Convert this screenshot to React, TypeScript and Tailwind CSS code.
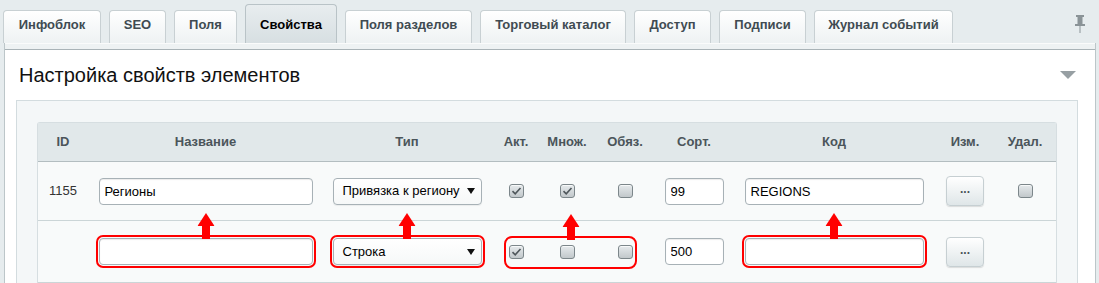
import React from 'react';

const tabs = [
  { label: 'Инфоблок', w: 'w-[98px]' },
  { label: 'SEO', w: 'w-[57px]' },
  { label: 'Поля', w: 'w-[63px]' },
  { label: 'Свойства', w: 'w-[92px]', active: true },
  { label: 'Поля разделов', w: 'w-[127px]' },
  { label: 'Торговый каталог', w: 'w-[146px]' },
  { label: 'Доступ', w: 'w-[77px]' },
  { label: 'Подписи', w: 'w-[87px]' },
  { label: 'Журнал событий', w: 'w-[139px]' },
];

const headers = ['ID', 'Название', 'Тип', 'Акт.', 'Множ.', 'Обяз.', 'Сорт.', 'Код', 'Изм.', 'Удал.'];

const cols = 'grid grid-cols-[50px_235px_168px_50px_52px_64px_74px_206px_56px_64px]';

function Arrow() {
  return (
    <svg
      width="17"
      height="26"
      viewBox="0 0 17 26"
      className="absolute bottom-full left-1/2 -translate-x-1/2 -mb-[2px]"
    >
      <polygon points="8.5,0 17,13 0,13" fill="#ff0000" />
      <rect x="4.5" y="12" width="8" height="14" fill="#ff0000" />
    </svg>
  );
}

function Marked({ children }: { children: React.ReactNode }) {
  return (
    <div className="relative">
      {children}
      <div className="pointer-events-none absolute -inset-[3px] rounded-[7px] border-2 border-[#ff0000]">
        <Arrow />
      </div>
    </div>
  );
}

function TextInput({ value, w }: { value: string; w: string }) {
  return (
    <input
      readOnly
      value={value}
      className={`${w} h-[27px] rounded-[4px] border border-[#a7b1b6] bg-white px-[5px] text-[13px] text-black shadow-[inset_0_1px_1px_rgba(0,0,0,0.08)] outline-none`}
    />
  );
}

function Select({ value }: { value: string }) {
  return (
    <div className="flex h-[27px] w-[149px] items-center justify-between rounded-[4px] border border-[#a7b1b6] bg-gradient-to-b from-white to-[#f6f8f8] pl-[9px] pr-[6px] text-[13px] text-black shadow-[0_1px_1px_rgba(0,0,0,0.06)]">
      <span className="whitespace-nowrap">{value}</span>
      <svg width="8" height="6" viewBox="0 0 8 6">
        <polygon points="0,0 8,0 4,6" fill="#111" />
      </svg>
    </div>
  );
}

function Checkbox({ checked }: { checked?: boolean }) {
  return (
    <div className="flex h-[14px] w-[15px] items-center justify-center rounded-[3px] border border-[#7c868a] bg-gradient-to-b from-[#e6eaec] to-[#c2c8cb] shadow-[inset_0_1px_0_rgba(255,255,255,0.7)]">
      {checked && (
        <svg width="11" height="10" viewBox="0 0 11 10">
          <path d="M1.5 5.2 L4.2 7.8 L9.5 2" stroke="#4f575b" strokeWidth="1.6" fill="none" />
        </svg>
      )}
    </div>
  );
}

function DotsButton() {
  return (
    <div className="flex h-[30px] w-[38px] items-center justify-center rounded-[4px] border border-[#c6cfd2] bg-gradient-to-b from-white to-[#dfe6e8] pb-[4px] text-[12px] font-bold text-[#4a5357] shadow-[0_1px_1px_rgba(0,0,0,0.12)]">
      ...
    </div>
  );
}

export default function App() {
  return (
    <div className="h-[283px] w-[1099px] overflow-hidden bg-[#e6ecee] font-['Liberation_Sans',Arial,sans-serif]">
      <div className="flex h-[43px] items-end gap-[8px] pl-[3px]">
        {tabs.map((t) => (
          <div
            key={t.label}
            className={`${t.w} flex items-end justify-center rounded-t-[4px] border border-b-0 pb-[10px] text-[13px] font-bold leading-[16px] whitespace-nowrap ${
              t.active
                ? 'h-[39px] border-[#b9c3c7] bg-gradient-to-b from-[#e8edef] to-[#d7dfe2] text-black'
                : 'h-[33px] border-[#c8d0d3] bg-gradient-to-b from-white to-[#eef2f3] text-[#404b52]'
            }`}
          >
            {t.label}
          </div>
        ))}
        <svg width="10" height="18" viewBox="0 0 10 18" className="ml-auto mr-[14px] self-start mt-[15px]">
          <rect x="1" y="0" width="8" height="2" fill="#8a9397" />
          <rect x="2.5" y="2" width="5" height="7" fill="#8a9397" />
          <rect x="0" y="9" width="10" height="2" fill="#8a9397" />
          <rect x="4.5" y="11" width="1" height="7" fill="#8a9397" />
        </svg>
      </div>

      <div className="ml-[4px] w-[1092px] border-x border-[#bcc6c9] bg-white">
        <div className="h-[7px] border-t border-b border-t-[#fafbfb] border-b-[#a9b3b7] bg-[#eef2f3]" />
        <div className="flex h-[50px] items-center justify-between pl-[14px] pr-[19px]">
          <div className="text-[20px] text-[#111]">Настройка свойств элементов</div>
          <svg width="16" height="8" viewBox="0 0 16 8">
            <polygon points="0,0 16,0 8,8" fill="#979fa3" />
          </svg>
        </div>

        <div className="ml-[11px] w-[1062px] border border-[#d3dcdf] bg-[#f4f7f8] px-[20px] pt-[21px] pb-[20px]">
          <div className="rounded-t-[3px] border-x border-t border-[#d6dee1] bg-[#f8fafa]">
            <div className={`${cols} h-[39px] border-b border-[#b3bdc0] bg-[#e1e8ea] text-[13px] font-bold text-[#4b555a]`}>
              {headers.map((h) => (
                <div key={h} className="flex items-center justify-center">
                  {h}
                </div>
              ))}
            </div>

            <div className={`${cols} h-[59px] border-b border-[#cbd5d7] text-[13px]`}>
              <div className="flex items-center justify-center text-[#333]">1155</div>
              <div className="flex items-center justify-center">
                <TextInput value="Регионы" w="w-[214px]" />
              </div>
              <div className="flex items-center justify-center">
                <Select value="Привязка к региону" />
              </div>
              <div className="flex items-center justify-center">
                <Checkbox checked />
              </div>
              <div className="flex items-center justify-center">
                <Checkbox checked />
              </div>
              <div className="flex items-center justify-center">
                <Checkbox />
              </div>
              <div className="flex items-center justify-center">
                <TextInput value="99" w="w-[59px]" />
              </div>
              <div className="flex items-center justify-center">
                <TextInput value="REGIONS" w="w-[179px]" />
              </div>
              <div className="flex items-center justify-center">
                <DotsButton />
              </div>
              <div className="flex items-center justify-center">
                <Checkbox />
              </div>
            </div>

            <div className={`${cols} h-[62px] border-b border-[#cbd5d7] text-[13px]`}>
              <div />
              <div className="flex items-center justify-center">
                <Marked>
                  <TextInput value="" w="w-[214px]" />
                </Marked>
              </div>
              <div className="flex items-center justify-center">
                <Marked>
                  <Select value="Строка" />
                </Marked>
              </div>
              <div className="relative col-span-3 grid grid-cols-[50px_52px_64px]">
                <div className="flex items-center justify-center">
                  <Checkbox checked />
                </div>
                <div className="flex items-center justify-center">
                  <Checkbox />
                </div>
                <div className="flex items-center justify-center">
                  <Checkbox />
                </div>
                <div className="pointer-events-none absolute left-[13px] top-[15px] h-[33px] w-[133px] rounded-[8px] border-2 border-[#ff0000]">
                  <Arrow />
                </div>
              </div>
              <div className="flex items-center justify-center">
                <TextInput value="500" w="w-[59px]" />
              </div>
              <div className="flex items-center justify-center">
                <Marked>
                  <TextInput value="" w="w-[179px]" />
                </Marked>
              </div>
              <div className="flex items-center justify-center">
                <DotsButton />
              </div>
              <div />
            </div>
          </div>
        </div>
      </div>
    </div>
  );
}
